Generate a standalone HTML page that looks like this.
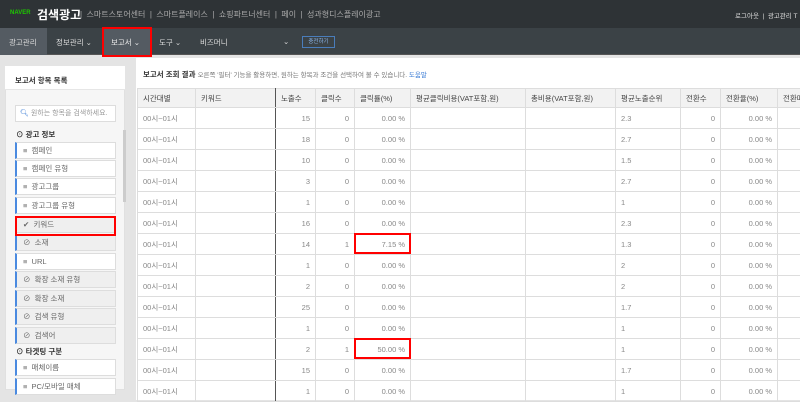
<!DOCTYPE html>
<html><head><meta charset="utf-8"><style>
*{margin:0;padding:0;box-sizing:border-box}
body{width:800px;height:400px;overflow:hidden;background:#e4e4e4;font-family:"Liberation Sans","Noto Sans CJK KR",sans-serif;font-size:8px;color:#333;position:relative}
.top{position:absolute;left:0;top:0;width:800px;height:28px;background:#2e3336}
.nav{position:absolute;left:0;top:28px;width:800px;height:27px;background:#3b4246;border-bottom:1px solid #555}
.a{position:absolute;white-space:nowrap}
.red{position:absolute;border:2px solid #f00}
.panel{position:absolute;left:5px;top:66px;width:120px;height:324px;background:#f6f6f6;border:1px solid #e0e0e0}
.it{position:absolute;left:15px;width:101px;height:17px;background:#fff;border:1px solid #ddd;border-left:2px solid #4a8ae0;font-size:7.5px;color:#666;line-height:15px;padding-left:6px}
.it.g{background:#efefef}
.main{position:absolute;left:136px;top:58px;width:664px;height:342px;background:#fff}
table{position:absolute;left:137px;top:88px;width:680px;border-collapse:collapse;table-layout:fixed;font-size:7.5px;color:#888}
td,th{height:21px;border:1px solid #ddd;padding:0 5px;white-space:nowrap;overflow:hidden}
th{height:19px;background:#f2f2f2;color:#444;font-weight:normal;text-align:left}
td.r{text-align:right}
.k{border-right:1px solid #555}
</style></head><body>
<div class="top"></div>
<div class="a" style="left:10px;top:10px;color:#1ec800;font-weight:bold;font-size:6px">NAVER</div>
<div class="a" style="left:37px;top:6px;color:#fff;font-weight:bold;font-size:12px">검색광고</div>
<div class="a" style="left:80px;top:9px;color:#aaa;font-size:8px">| &nbsp;스마트스토어센터 &nbsp;| &nbsp;스마트플레이스 &nbsp;| &nbsp;쇼핑파트너센터 &nbsp;| &nbsp;페이 &nbsp;| &nbsp;성과형디스플레이광고</div>
<div class="a" style="left:735px;top:10px;color:#ddd;font-size:6.5px">로그아웃 &nbsp;| &nbsp;광고관리 T</div>
<div class="nav"></div>
<div class="a" style="left:0;top:28px;width:47px;height:27px;background:#545b62"></div>
<div class="a" style="left:9px;top:37px;color:#ddd;font-size:7.5px">광고관리</div>
<div class="a" style="left:56px;top:37px;color:#ddd;font-size:7.5px">정보관리 ⌄</div>
<div class="a" style="left:103px;top:28px;width:47px;height:27px;background:#545b62"></div>
<div class="a" style="left:111px;top:37px;color:#eee;font-size:7.5px">보고서 ⌄</div>
<div class="a" style="left:159px;top:37px;color:#ddd;font-size:7.5px">도구 ⌄</div>
<div class="a" style="left:200px;top:37px;color:#ddd;font-size:7.5px">비즈머니</div>
<div class="a" style="left:283px;top:37px;color:#ddd;font-size:7.5px">⌄</div>
<div class="a" style="left:302px;top:36px;width:33px;height:12px;border:1px solid #4a7dbb;color:#8ab4e8;font-size:5.5px;text-align:center;line-height:10px">충전하기</div>
<div class="red" style="left:102px;top:27px;width:50px;height:30px"></div>

<div class="panel"></div>
<div class="a" style="left:5px;top:66px;width:120px;height:24px;background:#fff;border-bottom:1px solid #e6e6e6"></div>
<div class="a" style="left:15px;top:75px;font-weight:bold;font-size:7.5px;color:#333">보고서 항목 목록</div>
<div class="a" style="left:15px;top:105px;width:101px;height:17px;background:#fff;border:1px solid #ddd;font-size:7px;color:#999;line-height:15px;padding-left:4px"><span style="color:#3a7bd5">🔍︎</span> 원하는 항목을 검색하세요.</div>
<div class="a" style="left:16px;top:129px;font-size:7.5px;font-weight:bold;color:#333">⊙ 광고 정보</div>
<div class="a" style="left:123px;top:130px;width:3px;height:72px;background:#ccc"></div>
<div class="it" style="top:142px">≡ &nbsp;캠페인</div>
<div class="it" style="top:160px">≡ &nbsp;캠페인 유형</div>
<div class="it" style="top:178px">≡ &nbsp;광고그룹</div>
<div class="it" style="top:197px">≡ &nbsp;광고그룹 유형</div>
<div class="it g" style="top:216px">✔ &nbsp;키워드</div>
<div class="it g" style="top:234px">⊘ &nbsp;소재</div>
<div class="it" style="top:253px">≡ &nbsp;URL</div>
<div class="it g" style="top:271px">⊘ &nbsp;확장 소재 유형</div>
<div class="it g" style="top:290px">⊘ &nbsp;확장 소재</div>
<div class="it g" style="top:308px">⊘ &nbsp;검색 유형</div>
<div class="it g" style="top:327px">⊘ &nbsp;검색어</div>
<div class="a" style="left:16px;top:346px;font-size:7.5px;font-weight:bold;color:#333">⊙ 타겟팅 구분</div>
<div class="it" style="top:359px">≡ &nbsp;매체이름</div>
<div class="it" style="top:378px">≡ &nbsp;PC/모바일 매체</div>
<div class="red" style="left:15px;top:216px;width:101px;height:20px"></div>

<div class="main"></div>
<div class="a" style="left:143px;top:69px;font-size:7.5px;font-weight:bold;color:#333">보고서 조회 결과 <span style="font-weight:normal;color:#777;font-size:6.5px">오른쪽 '필터' 기능을 활용하면, 원하는 항목과 조건을 선택하여 볼 수 있습니다. <span style="color:#3a7bd5">도움말</span></span></div>
<table>
<colgroup><col style="width:58px"><col style="width:80px"><col style="width:40px"><col style="width:39px"><col style="width:56px"><col style="width:115px"><col style="width:90px"><col style="width:65px"><col style="width:40px"><col style="width:57px"><col style="width:40px"></colgroup>
<tr><th>시간대별</th><th class="k">키워드</th><th>노출수</th><th>클릭수</th><th>클릭률(%)</th><th>평균클릭비용(VAT포함,원)</th><th>총비용(VAT포함,원)</th><th>평균노출순위</th><th>전환수</th><th>전환율(%)</th><th>전환매</th></tr>
<tr><td>00시~01시</td><td class="k"></td><td class="r">15</td><td class="r">0</td><td class="r">0.00 %</td><td></td><td></td><td>2.3</td><td class="r">0</td><td class="r">0.00 %</td><td></td></tr>
<tr><td>00시~01시</td><td class="k"></td><td class="r">18</td><td class="r">0</td><td class="r">0.00 %</td><td></td><td></td><td>2.7</td><td class="r">0</td><td class="r">0.00 %</td><td></td></tr>
<tr><td>00시~01시</td><td class="k"></td><td class="r">10</td><td class="r">0</td><td class="r">0.00 %</td><td></td><td></td><td>1.5</td><td class="r">0</td><td class="r">0.00 %</td><td></td></tr>
<tr><td>00시~01시</td><td class="k"></td><td class="r">3</td><td class="r">0</td><td class="r">0.00 %</td><td></td><td></td><td>2.7</td><td class="r">0</td><td class="r">0.00 %</td><td></td></tr>
<tr><td>00시~01시</td><td class="k"></td><td class="r">1</td><td class="r">0</td><td class="r">0.00 %</td><td></td><td></td><td>1</td><td class="r">0</td><td class="r">0.00 %</td><td></td></tr>
<tr><td>00시~01시</td><td class="k"></td><td class="r">16</td><td class="r">0</td><td class="r">0.00 %</td><td></td><td></td><td>2.3</td><td class="r">0</td><td class="r">0.00 %</td><td></td></tr>
<tr><td>00시~01시</td><td class="k"></td><td class="r">14</td><td class="r">1</td><td class="r">7.15 %</td><td></td><td></td><td>1.3</td><td class="r">0</td><td class="r">0.00 %</td><td></td></tr>
<tr><td>00시~01시</td><td class="k"></td><td class="r">1</td><td class="r">0</td><td class="r">0.00 %</td><td></td><td></td><td>2</td><td class="r">0</td><td class="r">0.00 %</td><td></td></tr>
<tr><td>00시~01시</td><td class="k"></td><td class="r">2</td><td class="r">0</td><td class="r">0.00 %</td><td></td><td></td><td>2</td><td class="r">0</td><td class="r">0.00 %</td><td></td></tr>
<tr><td>00시~01시</td><td class="k"></td><td class="r">25</td><td class="r">0</td><td class="r">0.00 %</td><td></td><td></td><td>1.7</td><td class="r">0</td><td class="r">0.00 %</td><td></td></tr>
<tr><td>00시~01시</td><td class="k"></td><td class="r">1</td><td class="r">0</td><td class="r">0.00 %</td><td></td><td></td><td>1</td><td class="r">0</td><td class="r">0.00 %</td><td></td></tr>
<tr><td>00시~01시</td><td class="k"></td><td class="r">2</td><td class="r">1</td><td class="r">50.00 %</td><td></td><td></td><td>1</td><td class="r">0</td><td class="r">0.00 %</td><td></td></tr>
<tr><td>00시~01시</td><td class="k"></td><td class="r">15</td><td class="r">0</td><td class="r">0.00 %</td><td></td><td></td><td>1.7</td><td class="r">0</td><td class="r">0.00 %</td><td></td></tr>
<tr><td>00시~01시</td><td class="k"></td><td class="r">1</td><td class="r">0</td><td class="r">0.00 %</td><td></td><td></td><td>1</td><td class="r">0</td><td class="r">0.00 %</td><td></td></tr>
</table>
<div class="red" style="left:354px;top:233px;width:57px;height:21px"></div>
<div class="red" style="left:354px;top:338px;width:57px;height:21px"></div>
</body></html>
